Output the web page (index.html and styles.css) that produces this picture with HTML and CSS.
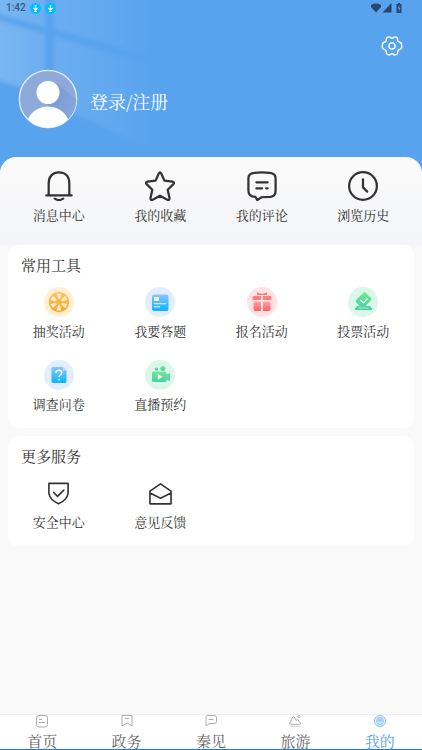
FILE: index.html
```html
<!DOCTYPE html>
<html lang="zh-CN">
<head>
<meta charset="utf-8">
<meta name="viewport" content="width=device-width, initial-scale=1">
<title>我的</title>
<link rel="stylesheet" href="styles.css">
</head>
<body>
<header class="hero">
  <svg class="hero-light" viewBox="0 0 160 157" aria-hidden="true">
    <defs>
      <linearGradient id="beam" x1="0" y1="0" x2="148" y2="0" gradientUnits="userSpaceOnUse"><stop offset="0" stop-color="#fff" stop-opacity=".2"/><stop offset=".35" stop-color="#fff" stop-opacity=".12"/><stop offset=".6" stop-color="#fff" stop-opacity=".08"/><stop offset="1" stop-color="#fff" stop-opacity=".01"/></linearGradient>
      <filter id="soft" x="-10%" y="-10%" width="120%" height="120%"><feGaussianBlur stdDeviation="2"/></filter>
    </defs>
    <g fill="url(#beam)" filter="url(#soft)">
      <path d="M-8-8H45V27L-8 12zM54-8H148V55L54 29zM-8 18L45 34V96L-8 78zM54 36L148 65V148L54 104z"/>
    </g>
  </svg>
  <div class="status">
    <span class="time">1:42</span>
    <svg width="11" height="11" viewBox="0 0 11 11" aria-hidden="true"><circle cx="5.500" cy="5.500" r="5.500" fill="#00bfff"/><path d="M5.500 2v5M3.500 5l2 2 2-2M4 8.300h3" fill="none" stroke="#fff" stroke-width="1.200"/></svg>
    <svg width="11" height="11" viewBox="0 0 11 11" aria-hidden="true"><circle cx="5.500" cy="5.500" r="5.500" fill="#00bfff"/><path d="M5.500 2v5M3.500 5l2 2 2-2M4 8.300h3" fill="none" stroke="#fff" stroke-width="1.200"/></svg>
    <svg class="signals" width="32" height="10" viewBox="0 0 32 10" fill="#29476a" aria-hidden="true"><path d="M0 2Q5-.8 10 2V4L5 9.500 0 4zM20.500 0V9.500H11.500z"/><path d="M25.500 1h1.500V0h2v1h1.500v9h-5z"/><path d="M28.500 2L26.700 5.500H28V8.500L29.500 4.800H28.300z" fill="#58a3ee"/></svg>
  </div>
  <button class="settings" type="button" aria-label="设置">
    <svg width="22" height="22" viewBox="0 0 22 22" fill="none" stroke="#fff" stroke-width="1.400" stroke-linejoin="round"><path d="M7 2.200Q9 1.500 9.500 2.500Q11 4 12.500 2.500Q13.500 1.500 15 2.200Q17 3 16.500 4.500Q16.500 7 19 7.200Q20.500 7.500 20.700 10V12Q20.500 14 19 14.300Q16.500 15 16.800 17.300Q17 19 15 19.500Q13.500 20.500 12.500 19.300Q11 18 9.500 19.300Q8.500 20.500 7 19.500Q5 19 5.300 17.300Q5.500 15 3 14.300Q1.500 14 1.300 12V10Q1.500 7.500 3 7.200Q5.500 7 5.300 4.500Q5 3 7 2.200z"/><circle cx="11" cy="11" r="3.100"/></svg>
  </button>
  <a class="profile" href="#login">
    <svg class="avatar" width="60" height="60" viewBox="0 0 60 60" aria-hidden="true">
      <defs>
        <clipPath id="face"><circle cx="30" cy="30" r="28.500"/></clipPath>
        <linearGradient id="shade" x1="0" y1="0" x2="1" y2="1"><stop offset="0" stop-color="#7697d5"/><stop offset="1" stop-color="#8eabdc"/></linearGradient>
      </defs>
      <circle cx="30" cy="30" r="28.700" fill="#8eaadb" stroke="#e5effb" stroke-width="1.300"/>
      <g clip-path="url(#face)"><path d="M38 14L60 32V60H47L30 37z" fill="url(#shade)"/><circle cx="30" cy="23.500" r="11.500" fill="#fff"/><ellipse cx="30" cy="56" rx="21" ry="18.500" fill="#fff"/></g>
    </svg>
    <span>登录/注册</span>
  </a>
</header>
<main>
  <nav class="shortcuts grid" aria-label="快捷入口">
    <a class="item" href="#messages"><svg class="line" viewBox="0 0 32 32" aria-hidden="true"><path d="M5 25.500V13C5 5.500 9.500 1.500 16 1.500s11 4 11 11.500v12.500M2.500 26H29.500M11.500 29.500q4.500 3 9 0"/></svg><span>消息中心</span></a>
    <a class="item" href="#favorites"><svg class="line" viewBox="0 0 32 32" aria-hidden="true"><path d="M14.700 2.600Q16 .4 17.300 2.600L20.700 10.300 29.300 11.300Q32 12 30.300 14L24.200 20 26.200 29Q26.200 31.600 23.800 30.600L16 26.400 8.200 30.600Q5.800 31.600 5.800 29L7.800 20 1.700 14Q0 12 2.700 11.300L11.300 10.300z"/></svg><span>我的收藏</span></a>
    <a class="item" href="#comments"><svg class="line" viewBox="0 0 32 32" aria-hidden="true"><path d="M7.500 2Q16 1 24.500 2Q30.500 2.500 30.500 8V21Q30.500 27 25 27.500L15.500 28 11 31 9 27.700Q1.500 27 1.500 21V8Q1.500 2.500 7.500 2zM10 12h12M10 18.500h6M20.500 18.500h1.500"/></svg><span>我的评论</span></a>
    <a class="item" href="#history"><svg class="line" viewBox="0 0 32 32" aria-hidden="true"><circle cx="16" cy="16" r="14.800"/><path d="M16 9v8.500l4.500 4.500"/></svg><span>浏览历史</span></a>
  </nav>
  <section class="card">
    <h2>常用工具</h2>
    <div class="grid tools">
      <a class="item" href="#lottery"><svg viewBox="0 0 30 30" aria-hidden="true"><defs><linearGradient id="orange" x2="0" y2="1"><stop stop-color="#fdc368"/><stop offset="1" stop-color="#ffa523"/></linearGradient></defs><circle cx="15" cy="15" r="15" fill="#fff0d2"/><circle cx="15" cy="15" r="10.200" fill="url(#orange)"/><g fill="#fff0d2"><path id="slot" d="M12.700 6.800Q15 6 17.300 6.800L15.800 12H14.200z"/><use href="#slot" transform="rotate(60 15 15)"/><use href="#slot" transform="rotate(120 15 15)"/><use href="#slot" transform="rotate(180 15 15)"/><use href="#slot" transform="rotate(240 15 15)"/><use href="#slot" transform="rotate(300 15 15)"/></g></svg><span>抽奖活动</span></a>
      <a class="item" href="#quiz"><svg viewBox="0 0 30 30" aria-hidden="true"><defs><linearGradient id="blue" x2="0" y2="1"><stop stop-color="#8ac4fc"/><stop offset="1" stop-color="#08b6ff"/></linearGradient></defs><circle cx="15" cy="15" r="15" fill="#e2eefe"/><rect x="7" y="7.500" width="16.500" height="16.500" rx="2" fill="url(#blue)"/><path d="M9 10h5v4H9zM9 16.200h12v1H9zM9 19.300h6v1H9z" fill="#eef7ff"/></svg><span>我要答题</span></a>
      <a class="item" href="#signup"><svg viewBox="0 0 30 30" aria-hidden="true"><defs><linearGradient id="red" x2="0" y2="1"><stop stop-color="#ffa2a2"/><stop offset="1" stop-color="#ff5e64"/></linearGradient></defs><circle cx="15" cy="15" r="15" fill="#ffe3e3"/><path d="M10 5.500l5 1.500 5-1.500v2.500H10z" fill="#ff7579"/><path d="M6.500 9H14v4H5.500V10zM16 9h7.500l1 1v3H16z" fill="#ff7c80"/><path d="M6.500 14.500H14V24H8.500Q6.500 24 6.500 22zM16 14.500h7.500V22q0 2-2 2H16z" fill="url(#red)"/></svg><span>报名活动</span></a>
      <a class="item" href="#vote"><svg viewBox="0 0 30 30" aria-hidden="true"><defs><linearGradient id="green" x2="0" y2="1"><stop stop-color="#7ce295"/><stop offset="1" stop-color="#43d2a7"/></linearGradient></defs><circle cx="15" cy="15" r="15" fill="#dbf7e9"/><path d="M15.500 5.400Q16.500 4.500 17.500 5.500L23 11Q24 12 23 13L17 19.500H12L8 15Q7 14 8 13zM9 19H22L24 21.500V23H7v-1.500z" fill="url(#green)"/><path d="M12.500 13l3 3 4-4.500" fill="none" stroke="#eafff3" stroke-width="1.200"/><path d="M10.500 21h10" stroke="#aeeacd"/></svg><span>投票活动</span></a>
      <a class="item" href="#survey"><svg viewBox="0 0 30 30" aria-hidden="true"><circle cx="15" cy="15" r="15" fill="#e2eefe"/><path d="M9 7h10l3.500 3.500V21.500Q22.500 23 21 23H9Q7.500 23 7.500 21.500V8.500Q7.500 7 9 7z" fill="url(#blue)"/><path d="M19 7v3.500h3.500z" fill="#c8e3ff"/><path d="M12 12.700C12 9.500 17.800 9.500 17.800 12.700C17.800 15 15 14.500 15 17.200M15 19v1.600" fill="none" stroke="#fff" stroke-width="1.500"/></svg><span>调查问卷</span></a>
      <a class="item" href="#live"><svg viewBox="0 0 30 30" aria-hidden="true"><circle cx="15" cy="15" r="15" fill="#dbf7e9"/><g fill="url(#green)"><circle cx="11.500" cy="9" r="1.700"/><circle cx="17.800" cy="8.500" r="2.500"/><path d="M8.500 11.500H20Q21.500 11.500 21.500 13v1.500L25 13v8l-3.500-1.500v1Q21.500 22 20 22H8.500Q7 22 7 20.500V13Q7 11.500 8.500 11.500z"/></g><path d="M12.800 13.800v6l4.700-3z" fill="#effff7"/></svg><span>直播预约</span></a>
    </div>
  </section>
  <section class="card">
    <h2>更多服务</h2>
    <div class="grid more">
      <a class="item" href="#security"><svg class="line" viewBox="0 0 24 24" aria-hidden="true"><path d="M2 1.500H22V12Q21 18.500 12 22.800Q3 18.500 2 12zM7 11l4 4 6.500-6.500"/></svg><span>安全中心</span></a>
      <a class="item" href="#feedback"><svg class="line" viewBox="0 0 24 24" aria-hidden="true"><path d="M1 9.500L12 2l11 7.500V22.800H1zM1 11.500l11 5.500 11-5.500"/></svg><span>意见反馈</span></a>
    </div>
  </section>
</main>
<nav class="tabs" aria-label="主导航">
  <a href="#home"><svg viewBox="0 0 14 14" aria-hidden="true"><rect x="1.500" y=".5" width="11" height="11.500" rx="2.500"/><path d="M4 4.500h3M4 7.500h6"/></svg><span>首页</span></a>
  <a href="#gov"><svg viewBox="0 0 14 14" aria-hidden="true"><path d="M2 .5h10v10.500L7 8 2 11zM5 3.500h4"/></svg><span>政务</span></a>
  <a href="#qin"><svg viewBox="0 0 14 14" aria-hidden="true"><path d="M3.500 .5h7Q12.500 .5 12.500 2.500v4Q12.500 8.500 10.500 8.500H5L2 11V2Q2 .5 3.500 .5zM4.500 4.500h5"/></svg><span>秦见</span></a>
  <a href="#travel"><svg viewBox="0 0 14 14" aria-hidden="true"><path d="M3 9.300Q.8 9.300 1.800 7.800L4.800 2Q5.500 .8 6.200 2L8.300 5.500 9.500 4.300 12.300 8Q13 9.300 11.500 9.300z"/><path d="M2 11.300h10.500" stroke="#ccc"/><circle cx="11" cy="1.500" r="1.100"/></svg><span>旅游</span></a>
  <a class="active" href="#mine" aria-current="page"><svg viewBox="0 0 14 14" aria-hidden="true"><circle cx="7" cy="6" r="5.500"/><circle cx="7" cy="6" r="4.200" fill="#a5d0fc" stroke="none"/><path d="M4.500 6.800q2.500 2.500 5 0" stroke="#fff"/></svg><span>我的</span></a>
</nav>
</body>
</html>
```
FILE: styles.css
```css
* { box-sizing: border-box; }

body {
  margin: 0;
  height: 100vh;
  display: flex;
  flex-direction: column;
  overflow: hidden;
  background: #f9f9f9;
  color: #333;
  font-family: "Noto Serif CJK SC", "Noto Sans CJK SC", serif;
  font-size: 13px;
  line-height: 20px;
}

a { color: inherit; text-decoration: none; }
svg { display: block; flex: none; }

.hero {
  position: relative;
  display: flex;
  flex-direction: column;
  flex: none;
  padding-bottom: 44px;
  background: #58a3ee;
}
.hero-light { position: absolute; top: 0; left: 0; width: 160px; }
.status {
  position: relative;
  display: flex;
  align-items: center;
  gap: 4px;
  height: 16px;
  padding: 0 19px 0 6px;
}
.time { color: #365c85; font: 500 10px/16px Roboto, sans-serif; }
.signals { margin-left: auto; }
.settings {
  position: relative;
  align-self: flex-end;
  margin: 19px 19px 0 0;
  padding: 0;
  border: 0;
  background: none;
}
.profile {
  position: relative;
  display: flex;
  align-items: center;
  gap: 12px;
  margin: 12px 18px 0;
  color: #fff;
  font-size: 18px;
  line-height: 26px;
}
.profile span { padding-top: 4px; }

main { flex: 1; min-height: 0; }
.grid {
  display: grid;
  grid-template-columns: repeat(4, 1fr);
}
.item { display: flex; flex-direction: column; align-items: center; }
.item svg { width: 30px; height: 30px; }
.line {
  fill: none;
  stroke: #333;
  stroke-width: 2.4;
  stroke-linecap: round;
  stroke-linejoin: round;
}
.shortcuts {
  position: relative;
  height: 88px;
  margin-top: -16px;
  padding: 14px 8px 0;
  border-radius: 16px 16px 0 0;
  background: linear-gradient(#fafafa, #f4f5f8);
}
.shortcuts .item { gap: 4px; }
.card {
  margin: 0 8px 8px;
  padding: 8px 0 14px;
  border-radius: 10px;
  background: #fff;
}
.card h2 {
  margin: 0;
  padding-left: 13px;
  font-size: 15px;
  font-weight: 400;
  line-height: 24px;
}
.tools { row-gap: 19px; padding-top: 10px; }
.tools .item { gap: 4px; }
.more { padding-top: 14px; }
.more .item { gap: 7px; }
.more .item svg { width: 23px; height: 23px; }
.more .line { stroke-width: 1.7; }

.tabs {
  display: flex;
  flex: none;
  height: 36px;
  overflow: hidden;
  border-top: 1px solid #eee;
  border-bottom: 1px solid #1a7bc9;
  background: #fff;
  color: #666;
  font-size: 15px;
  line-height: 24px;
}
.tabs a { display: flex; flex: 1; flex-direction: column; align-items: center; }
.tabs svg {
  width: 14px;
  height: 14px;
  fill: none;
  stroke: #999;
  stroke-width: 0.8;
}
.tabs .active { color: #58a3ee; }
.tabs .active svg { stroke: #58a3ee; }
```
